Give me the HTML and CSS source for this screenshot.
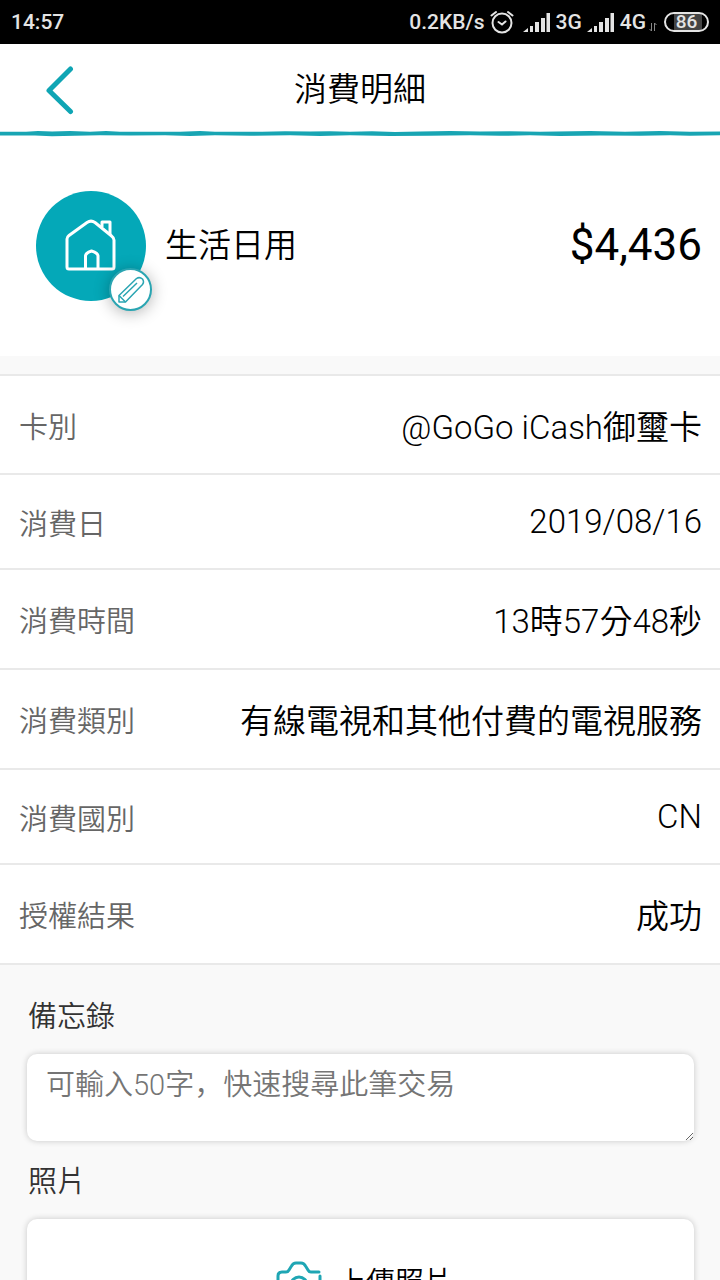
FILE: index.html
```html
<!DOCTYPE html>
<html lang="zh-Hant">
<head>
    <meta charset="UTF-8">
    <meta name="viewport" content="width=device-width, initial-scale=1.0">
    <title>消費明細</title>
    <link rel="stylesheet" href="styles.css">
</head>

<body>

    <!-- Status bar -->
    <div class="status-bar">
        <span class="clock">14:57</span>
        <div class="status-icons">
            <span>0.2KB/s</span>
            <svg class="alarm" width="24" height="24" viewBox="0 0 24 24" fill="none" stroke="#e4e4e4" stroke-width="2" stroke-linecap="round">
                <circle cx="12" cy="13" r="9.500"/>
                <path d="M1.500 5.500L6 2M22.500 5.500L18 2M8.500 12L12 14.500L15.500 11.500"/>
            </svg>
            <svg class="signal" width="28" height="20" viewBox="0 0 28 20" fill="#e4e4e4">
                <path d="M0 20L5 16V20ZM7 14H10V20H7ZM12 10H16V20H12ZM18 6H22V20H18ZM23.500 1H27V20H23.500Z"/>
            </svg>
            <span>3G</span>
            <svg class="signal" width="28" height="20" viewBox="0 0 28 20" fill="#e4e4e4">
                <path d="M0 20L5 16V20ZM7 14H10V20H7ZM12 10H16V20H12ZM18 6H22V20H18ZM23.500 1H27V20H23.500Z"/>
            </svg>
            <span class="network">4G
                <svg width="8" height="10" viewBox="0 0 8 10" fill="none" stroke="#888">
                    <path d="M2.500 1V9L.5 7M5.500 9V1L7.500 3"/>
                </svg>
            </span>
            <span class="battery">86</span>
        </div>
    </div>

    <!-- Title bar -->
    <header class="header">
        <button class="back-button" type="button" aria-label="返回">
            <svg width="28" height="50" viewBox="0 0 28 50" fill="none" stroke="#0fa5b4" stroke-width="5" stroke-linecap="round" stroke-linejoin="round">
                <path d="M24.500 4L3 25.500L24.500 46.500"/>
            </svg>
        </button>
        <h1>消費明細</h1>
        <svg class="brush-line" viewBox="0 0 720 6" preserveAspectRatio="none" fill="#18a5b3">
            <path d="M0 1.500L26 1.500L38 .8L52 1.200L70 .9L90 1.400L106 .8L120 1.500L180 1.400L200 .8L215 1.500L240 1.500L262 1.600L285 1L310 1.300L330 1L350 1.400L372 1L395 1.800L420 1.300L450 .8L480 1.300L510 1L540 1.500L590 .9L625 1.600L660 .9L690 1.500L720 1.200V4.600L690 5L670 4.500L640 5L600 4.700L560 5.100L530 4.500L500 5L470 4.600L430 5L390 5.200L350 4.500L320 5.100L290 4.600L250 5L215 4.600L190 5.200L165 4.600L130 4.800L100 4.400L75 5L52 5.300L35 4.700L0 4.700Z"/>
        </svg>
    </header>

    <main>
        <!-- Category and amount -->
        <section class="summary">
            <div class="category-icon">
                <svg width="52" height="54" viewBox="0 0 52 54" fill="none" stroke="#fff" stroke-width="3" stroke-linejoin="round">
                    <path d="M2 48V20Q2 18 4 16.500L22 3.500Q26 .8 30 3.500L46 16.500Q49 19 49 21V48Q49 50 47 50H4Q2 50 2 48Z"/>
                    <path d="M37 8V3H45V15.500M20.500 50V37Q20.500 34 26.500 32Q33 34 33 37V50"/>
                </svg>
                <button class="edit-button" type="button" aria-label="編輯類別">
                    <svg width="28" height="28" viewBox="0 0 28 28" fill="none" stroke="#2aa5b2" stroke-width="1.500" stroke-linejoin="round">
                        <path d="M2 26V19.500L19.500 2.500Q22.500 .5 25.500 3Q27.500 6 25.500 8.500L8.500 26Z"/>
                        <path d="M2 19.500L8.500 26M6 20.500L20 7"/>
                    </svg>
                </button>
            </div>
            <h2>生活日用</h2>
            <span class="amount">$4,436</span>
        </section>

        <!-- Details -->
        <dl class="details">
            <div class="row">
                <dt>卡別</dt>
                <dd>@GoGo iCash御璽卡</dd>
            </div>
            <div class="row short">
                <dt>消費日</dt>
                <dd>2019/08/16</dd>
            </div>
            <div class="row">
                <dt>消費時間</dt>
                <dd>13時57分48秒</dd>
            </div>
            <div class="row">
                <dt>消費類別</dt>
                <dd>有線電視和其他付費的電視服務</dd>
            </div>
            <div class="row short">
                <dt>消費國別</dt>
                <dd>CN</dd>
            </div>
            <div class="row">
                <dt>授權結果</dt>
                <dd>成功</dd>
            </div>
        </dl>

        <!-- Memo and photo -->
        <form class="notes">
            <label for="memo">備忘錄</label>
            <textarea id="memo" lang="zh-Hans" maxlength="50" placeholder="可輸入50字，快速搜尋此筆交易"></textarea>
            <h3>照片</h3>
            <button class="upload-button" type="button">
                <svg width="46" height="38" viewBox="0 0 46 38" fill="none" stroke="#1fa6b4" stroke-width="3" stroke-linecap="round" stroke-linejoin="round">
                    <path d="M43 11H35Q33 11 32 9L29.500 5Q28 2 25 2H20Q17 2 15.500 5L13 9Q12 11 10 11H6Q2 11 2 15V32Q2 36 6 36H40Q44 36 44 32V15"/>
                    <circle cx="23" cy="24" r="8"/>
                </svg>
                <span>上傳照片</span>
            </button>
        </form>
    </main>

</body>
</html>
```
FILE: styles.css
```css
* {
    box-sizing: border-box;
}

body {
    margin: 0;
    height: 100vh;
    display: flex;
    flex-direction: column;
    font-family: Roboto, "Noto Sans CJK TC", sans-serif;
    font-weight: 350;
    color: #000;
    background: #f9f9f9;
}

h1, h2, h3, dl, dd {
    margin: 0;
    font-weight: inherit;
}

button {
    padding: 0;
    border: none;
    background: none;
    font: inherit;
    color: inherit;
    cursor: pointer;
}

svg {
    display: block;
    flex-shrink: 0;
}

/* Status bar */
.status-bar {
    flex-shrink: 0;
    display: flex;
    justify-content: space-between;
    align-items: center;
    height: 44px;
    padding: 0 11px;
    background: #000;
    color: #e4e4e4;
    font-size: 21px;
    font-weight: 500;
}

.status-icons {
    display: flex;
    align-items: center;
    gap: 5px;
}

.alarm {
    margin-right: 4px;
}

.network {
    display: flex;
    align-items: flex-end;
    gap: 3px;
}

.network svg {
    margin-bottom: 2px;
}

.battery {
    width: 45px;
    height: 20px;
    margin-left: 2px;
    border: 2px solid #e4e4e4;
    border-radius: 10px;
    background: linear-gradient(90deg, #000 8px, #444 8px, #444 36px, #000 36px);
    font-size: 19px;
    line-height: 16px;
    text-align: center;
}

/* Title bar */
.header {
    position: relative;
    flex-shrink: 0;
    display: grid;
    grid-template-columns: 120px 1fr 120px;
    align-items: center;
    height: 92px;
    background: #fff;
}

.header h1 {
    font-size: 33px;
    line-height: 48px;
    text-align: center;
}

.back-button {
    display: flex;
    justify-content: center;
}

.brush-line {
    position: absolute;
    left: 0;
    bottom: -1px;
    width: 100%;
    height: 7px;
}

main {
    flex: 1;
    min-height: 0;
    overflow-y: auto;
    scrollbar-width: none;
}

/* Category and amount */
.summary {
    display: flex;
    align-items: center;
    gap: 19px;
    height: 220px;
    padding: 0 18px 0 36px;
    background: #fff;
}

.category-icon {
    position: relative;
    flex-shrink: 0;
    display: flex;
    align-items: center;
    justify-content: center;
    width: 110px;
    height: 110px;
    border-radius: 50%;
    background: #04a8b8;
}

.edit-button {
    position: absolute;
    right: -6px;
    bottom: -10px;
    display: flex;
    align-items: center;
    justify-content: center;
    width: 43px;
    height: 43px;
    border: 2px solid #2aa5b2;
    border-radius: 50%;
    background: #fff;
    box-shadow: 0 2px 16px rgba(0, 0, 0, 0.3);
}

.summary h2 {
    font-size: 33px;
    line-height: 48px;
}

.amount {
    margin-left: auto;
    padding-bottom: 2px;
    font-size: 44px;
    font-weight: 400;
}

/* Details */
.details {
    margin-top: 18px;
    border-top: 2px solid #e9e9e9;
}

.row {
    display: flex;
    justify-content: space-between;
    align-items: center;
    height: 100px;
    padding: 0 18px 0 19px;
    border-bottom: 2px solid #e9e9e9;
    background: #fff;
}

.row:first-child {
    height: 99px;
}

.row.short {
    height: 95px;
}

.row dt {
    font-size: 29px;
    color: #666;
}

.row dd {
    font-size: 33px;
}

/* Memo and photo */
.notes {
    display: flex;
    flex-direction: column;
    padding: 31px 26px 31px 27px;
}

.notes label,
.notes h3 {
    padding-left: 1px;
    font-size: 29px;
    line-height: 42px;
    color: #333;
}

.notes textarea {
    height: 87px;
    margin: 16px 0 20px;
    padding: 10px 19px;
    border: none;
    border-radius: 10px;
    background: #fff;
    box-shadow: 0 0 6px rgba(0, 0, 0, 0.2);
    font: inherit;
    font-size: 29px;
    line-height: 42px;
}

.notes textarea::placeholder {
    color: #757575;
}

.upload-button {
    display: flex;
    align-items: center;
    justify-content: center;
    gap: 15px;
    height: 122px;
    margin-top: 16px;
    padding-left: 8px;
    border-radius: 10px;
    background: #fff;
    box-shadow: 0 0 6px rgba(0, 0, 0, 0.2);
    font-size: 29px;
}
```
